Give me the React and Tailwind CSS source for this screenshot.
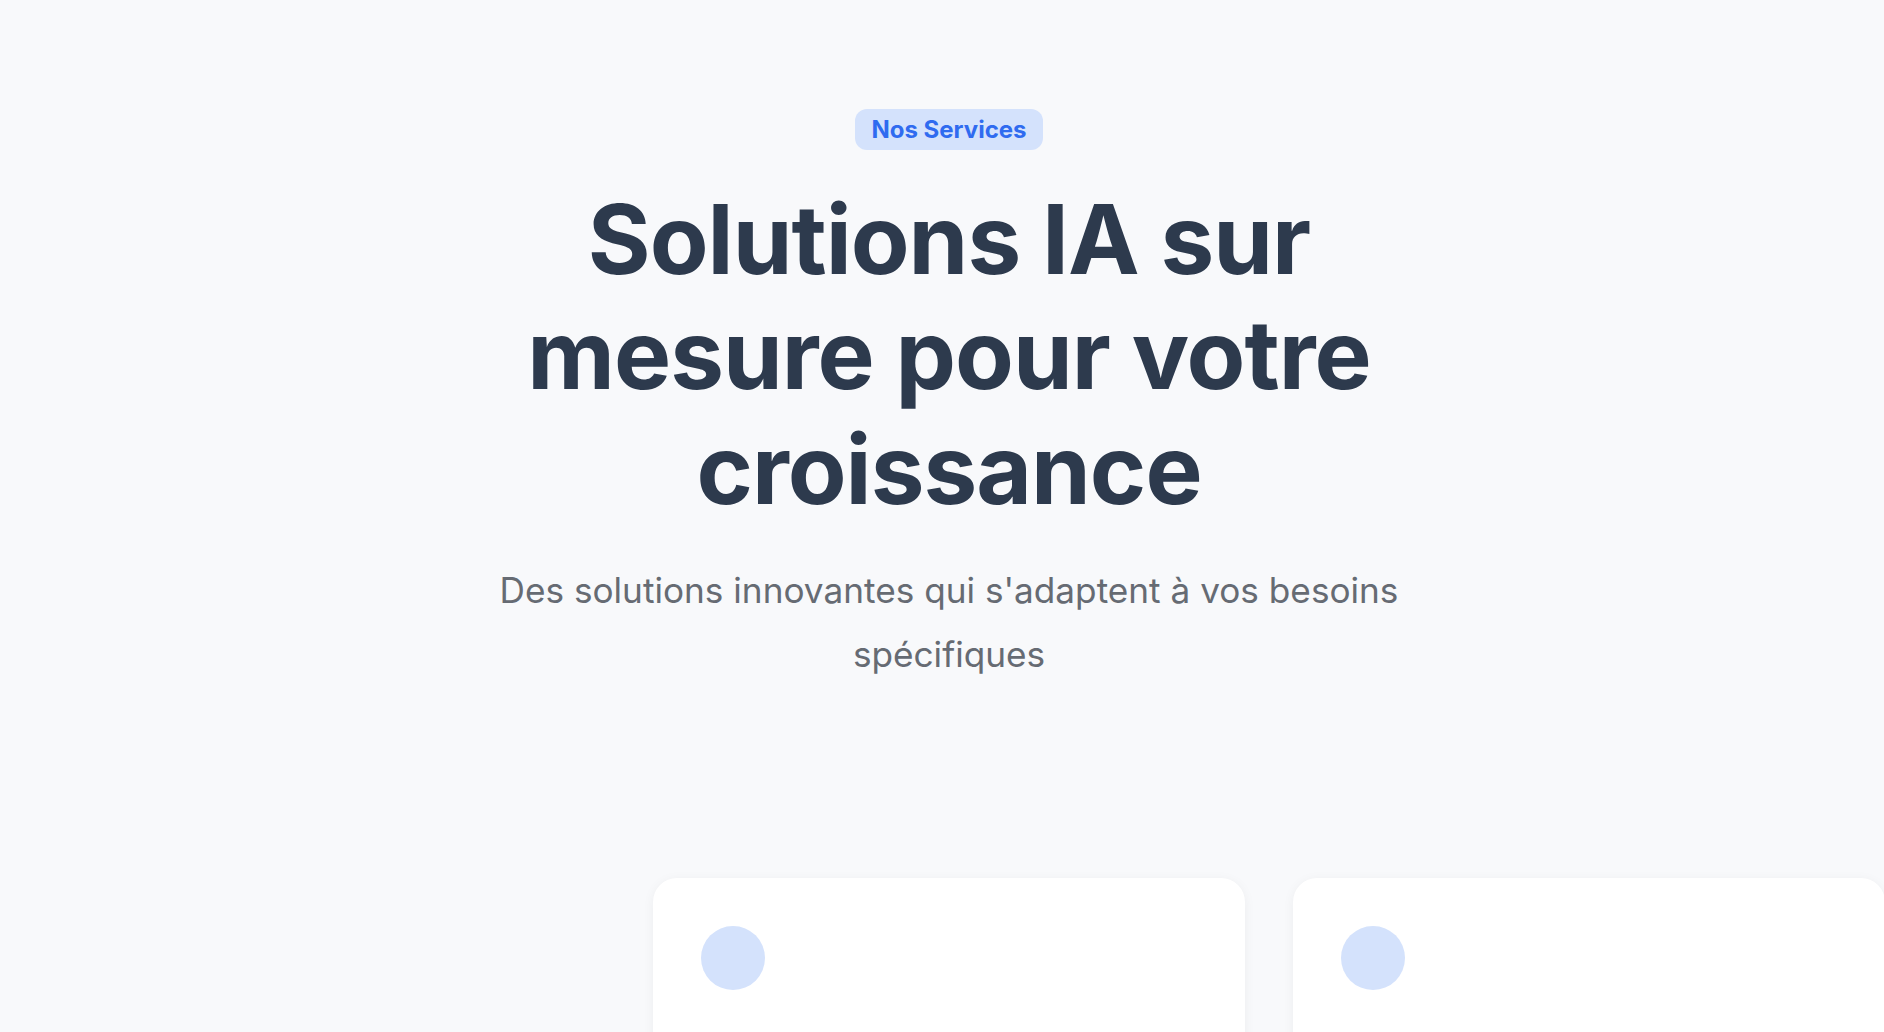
export default function App() {
  const cards = [1, 2, 3]

  return (
    <div
      className="min-h-screen w-full overflow-x-hidden bg-[#f8f9fb]"
      style={{ fontFamily: 'Inter, "Noto Sans", sans-serif' }}
    >
      <section className="flex flex-col items-center pl-[14px] pt-[109px]">
        <span className="rounded-xl bg-[#d4e2fc] px-4 py-[5px] text-[24px] font-bold leading-[31px] text-[#2f6bf0]">
          Nos Services
        </span>

        <h1 className="mt-[32px] max-w-[960px] text-center text-[96px] font-bold leading-[1.2] tracking-[-0.01em] text-[#2d3a4d]">
          Solutions IA sur mesure pour votre croissance
        </h1>

        <p className="mt-[30px] max-w-[960px] text-center text-[35.2px] leading-[64px] text-[#666b73]">
          Des solutions innovantes qui s'adaptent à vos besoins spécifiques
        </p>

        {/* carousel track */}
        <div className="mt-[192px] w-[592px]">
          <div className="flex gap-12">
            {cards.map((c) => (
              <div
                key={c}
                className="min-h-[420px] w-[592px] shrink-0 rounded-3xl bg-white p-12 shadow-[0_2px_12px_rgba(0,0,0,0.05)]"
              >
                <div className="h-16 w-16 rounded-full bg-[#d4e2fc]" />
              </div>
            ))}
          </div>
        </div>
      </section>
    </div>
  )
}
